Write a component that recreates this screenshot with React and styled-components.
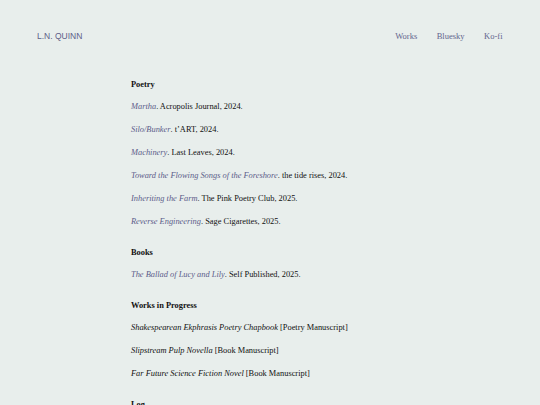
import React from 'react'
import styled, { createGlobalStyle } from 'styled-components'

const serif = '"Liberation Serif", "Times New Roman", Times, serif'

const GlobalStyle = createGlobalStyle`
    html, body {
        margin: 0;
        padding: 0;
        background-color: #e8eeec;
    }
    body {
        font-family: ${serif};
        color: #111111;
    }
`

const sections = [
    {
        title: 'Poetry',
        items: [
            { work: 'Martha', rest: '. Acropolis Journal, 2024.', link: true },
            { work: 'Silo/Bunker', rest: '. t\u2019ART, 2024.', link: true },
            { work: 'Machinery', rest: '. Last Leaves, 2024.', link: true },
            { work: 'Toward the Flowing Songs of the Foreshore', rest: '. the tide rises, 2024.', link: true },
            { work: 'Inheriting the Farm', rest: '. The Pink Poetry Club, 2025.', link: true },
            { work: 'Reverse Engineering', rest: '. Sage Cigarettes, 2025.', link: true },
        ],
    },
    {
        title: 'Books',
        items: [
            { work: 'The Ballad of Lucy and Lily', rest: '. Self Published, 2025.', link: true },
        ],
    },
    {
        title: 'Works in Progress',
        items: [
            { work: 'Shakespearean Ekphrasis Poetry Chapbook', rest: ' [Poetry Manuscript]' },
            { work: 'Slipstream Pulp Novella', rest: ' [Book Manuscript]' },
            { work: 'Far Future Science Fiction Novel', rest: ' [Book Manuscript]' },
        ],
    },
    {
        title: 'Log',
        items: [],
    },
]

function App() {
    return (
        <Page>
            <GlobalStyle />
            <Header>
                <Logo>L.N. QUINN</Logo>
                <Nav>
                    <NavLink>Works</NavLink>
                    <NavLink>Bluesky</NavLink>
                    <NavLink>Ko-fi</NavLink>
                </Nav>
            </Header>
            <Main>
                {sections.map((section) => (
                    <Section key={section.title}>
                        <Heading>{section.title}</Heading>
                        {section.items.map((item) => (
                            <Entry key={item.work}>
                                <Work $link={item.link}>{item.work}</Work>
                                {item.rest}
                            </Entry>
                        ))}
                    </Section>
                ))}
            </Main>
        </Page>
    )
}

export default App

const Page = styled.div`
    height: 405px;
    overflow: hidden;
    background-color: #e8eeec;
`

const Header = styled.header`
    display: flex;
    justify-content: space-between;
    align-items: center;
    padding: 30px 38px 0 37px;
    height: 12px;
`

const Logo = styled.div`
    font-family: "Liberation Sans", Arial, sans-serif;
    font-size: 8.5px;
    color: #5d6088;
`

const Nav = styled.nav`
    display: flex;
    gap: 19.5px;
    margin-right: -0.5px;
`

const NavLink = styled.span`
    font-family: ${serif};
    font-size: 8.5px;
    color: #63658c;
`

const Main = styled.main`
    width: 278px;
    margin: 0 auto;
    padding-top: 37px;
    display: flex;
    flex-direction: column;
    gap: 8px;
`

const Section = styled.section`
    display: flex;
    flex-direction: column;
`

const Heading = styled.h3`
    font-family: ${serif};
    font-size: 8.4px;
    font-weight: bold;
    line-height: 11px;
    height: 11px;
    margin: 0 0 11px;
`

const Entry = styled.p`
    font-family: ${serif};
    font-size: 8.4px;
    line-height: 11px;
    height: 11px;
    margin: 0 0 12px;
    color: #111111;
`

const Work = styled.i`
    color: ${(p) => (p.$link ? '#5c5d8a' : '#111111')};
`
